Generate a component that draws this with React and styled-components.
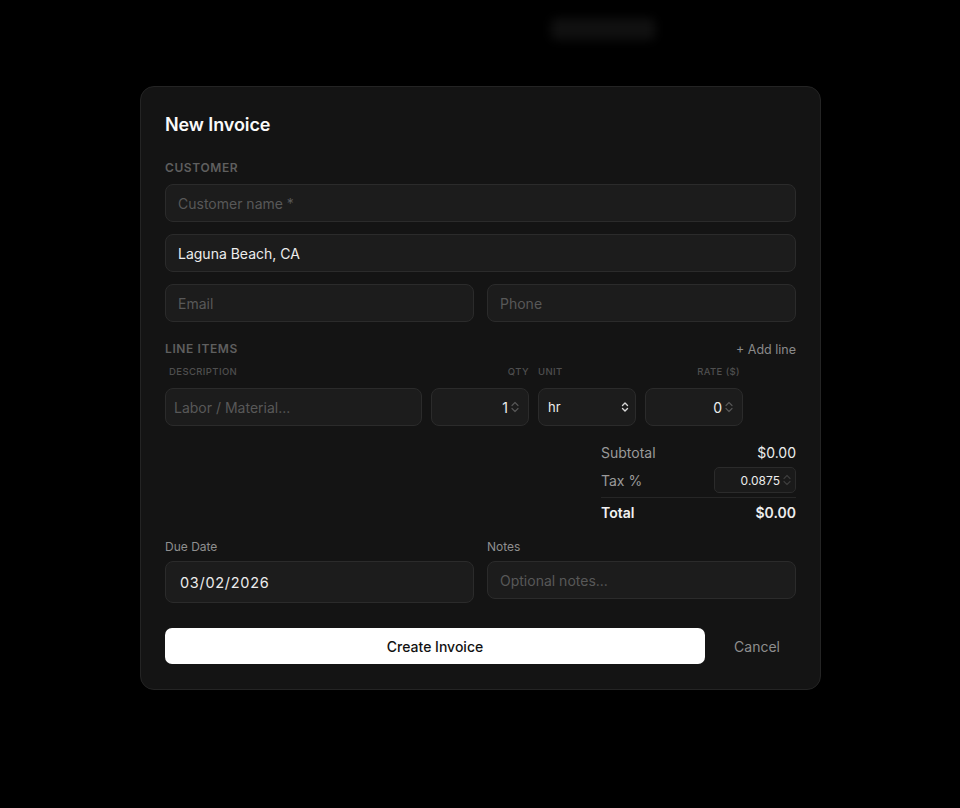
import React from "react";
import styled, { createGlobalStyle } from "styled-components";

const Global = createGlobalStyle`
  html, body { margin: 0; padding: 0; background: #000; }
  body { font-family: Inter, "Noto Sans", "Liberation Sans", sans-serif; -webkit-font-smoothing: antialiased; }
  * { box-sizing: border-box; }
  input::-webkit-outer-spin-button, input::-webkit-inner-spin-button { -webkit-appearance: none; margin: 0; }
`;

const Page = styled.div`
  width: 960px;
  height: 808px;
  background: #000;
  position: relative;
  overflow: hidden;
`;

const GhostBar = styled.div`
  display: flex;
  justify-content: flex-end;
  padding: 18px 305px 0 0;
`;

const Ghost = styled.div`
  width: 104px;
  height: 22px;
  border-radius: 6px;
  background: #101010;
  filter: blur(5px);
`;

const Overlay = styled.div`
  position: absolute;
  inset: 0;
  display: flex;
  justify-content: center;
  align-items: flex-start;
  padding: 86px 0 0 1px;
`;

const Modal = styled.div`
  width: 681px;
  background: #141414;
  border: 1px solid #242424;
  border-radius: 14px;
  padding: 25px 24px 25px 24px;
  display: flex;
  flex-direction: column;
`;

const Title = styled.h2`
  margin: 1px 0 0;
  font-size: 18px;
  font-weight: 600;
  color: #fafafa;
  line-height: 24px;
  letter-spacing: -0.1px;
`;

const Section = styled.div`
  margin-top: ${(p) => p.$mt || 0}px;
  display: flex;
  flex-direction: column;
  gap: ${(p) => p.$gap || 12}px;
`;

const SectionHead = styled.div`
  display: flex;
  justify-content: space-between;
  align-items: center;
`;

const SectionLabel = styled.div`
  font-size: 12px;
  font-weight: 600;
  letter-spacing: 0.6px;
  color: #5f5f5f;
  text-transform: uppercase;
  line-height: 16px;
`;

const AddLine = styled.button`
  background: none;
  border: none;
  padding: 0;
  font: inherit;
  font-size: 12.5px;
  color: #8a8a8a;
  cursor: pointer;
`;

const Field = styled.div`
  height: ${(p) => p.$h || 38}px;
  background: #1c1c1c;
  border: 1px solid #2b2b2b;
  border-radius: 8px;
  display: flex;
  align-items: center;
  padding: 0 ${(p) => p.$pr || 12}px 0 ${(p) => p.$pl || 12}px;
  min-width: 0;
  gap: 2px;
`;

const Input = styled.input`
  flex: 1;
  min-width: 0;
  background: transparent;
  border: none;
  outline: none;
  padding: 0;
  font-family: inherit;
  font-size: ${(p) => p.$fs || 14}px;
  color: #ececec;
  text-align: ${(p) => p.$align || "left"};
  letter-spacing: ${(p) => p.$ls || 0}px;
  &::placeholder { color: #585858; }
`;

const Row2 = styled.div`
  display: grid;
  grid-template-columns: 1fr 1fr;
  gap: 13px;
`;

const ItemsGrid = styled.div`
  display: grid;
  grid-template-columns: 1fr 98px 98px 98px 44px;
  column-gap: 9px;
  row-gap: 9px;
  margin-top: 1px;
`;

const ColHead = styled.div`
  font-size: 9.5px;
  font-weight: 500;
  letter-spacing: 0.4px;
  color: #4f4f4f;
  text-transform: uppercase;
  text-align: ${(p) => p.$align || "left"};
  padding: 0 ${(p) => p.$pr || 0}px 0 ${(p) => p.$pl || 0}px;
  line-height: 14px;
`;

const SelectText = styled.span`
  flex: 1;
  font-size: 13px;
  color: #ececec;
`;

const Totals = styled.div`
  align-self: flex-end;
  width: 195px;
  margin-top: 16px;
  display: flex;
  flex-direction: column;
`;

const TotalRow = styled.div`
  display: flex;
  justify-content: space-between;
  align-items: center;
  height: ${(p) => p.$h || 20}px;
  margin-top: ${(p) => p.$mt || 0}px;
  font-size: 14px;
  color: ${(p) => (p.$strong ? "#f2f2f2" : "#9a9a9a")};
  font-weight: ${(p) => (p.$strong ? 600 : 400)};
`;

const Amount = styled.span`
  color: #ededed;
  font-weight: ${(p) => (p.$strong ? 600 : 400)};
`;

const TaxField = styled(Field)`
  width: 82px;
  height: 26px;
  border-radius: 5px;
  padding: 0 3px 0 8px;
  background: #1a1a1a;
`;

const Divider = styled.div`
  height: 1px;
  background: #262626;
  margin: 3px 0 4px;
`;

const BottomGrid = styled.div`
  display: grid;
  grid-template-columns: 1fr 1fr;
  column-gap: 13px;
  margin-top: 17px;
  align-items: start;
`;

const FieldGroup = styled.div`
  display: flex;
  flex-direction: column;
  gap: 6px;
`;

const FieldLabel = styled.label`
  font-size: 12px;
  color: #8f8f8f;
  line-height: 16px;
`;

const Actions = styled.div`
  display: flex;
  align-items: center;
  margin-top: 25px;
`;

const Primary = styled.button`
  width: 540px;
  height: 36px;
  border: none;
  border-radius: 7px;
  background: #ffffff;
  color: #111;
  font-family: inherit;
  font-size: 14px;
  font-weight: 500;
`;

const Ghostbtn = styled.button`
  margin-left: auto;
  height: 36px;
  padding: 0 16px;
  border: none;
  background: none;
  color: #8e8e8e;
  font-family: inherit;
  font-size: 14px;
`;

const Spin = ({ color = "#555" }) => (
  <svg width="10" height="14" viewBox="0 0 10 14" fill="none" stroke={color} strokeWidth="1.2" strokeLinecap="round" strokeLinejoin="round">
    <path d="M2 5.5 L5 2.5 L8 5.5" />
    <path d="M2 8.5 L5 11.5 L8 8.5" />
  </svg>
);

const SelectIcon = () => (
  <svg width="8" height="12" viewBox="0 0 8 12" fill="none" stroke="#d8d8d8" strokeWidth="1.4" strokeLinecap="round" strokeLinejoin="round">
    <path d="M1.5 4.5 L4 2 L6.5 4.5" />
    <path d="M1.5 7.5 L4 10 L6.5 7.5" />
  </svg>
);

export default function App() {
  return (
    <>
      <Global />
      <Page>
        <GhostBar>
          <Ghost />
        </GhostBar>
        <Overlay>
          <Modal>
            <Title>New Invoice</Title>

            <Section $mt={23} $gap={8}>
              <SectionLabel>Customer</SectionLabel>
              <Section $gap={12}>
                <Field>
                  <Input placeholder="Customer name *" />
                </Field>
                <Field>
                  <Input defaultValue="Laguna Beach, CA" />
                </Field>
                <Row2>
                  <Field>
                    <Input placeholder="Email" />
                  </Field>
                  <Field>
                    <Input placeholder="Phone" />
                  </Field>
                </Row2>
              </Section>
            </Section>

            <Section $mt={19} $gap={7}>
              <SectionHead>
                <SectionLabel>Line items</SectionLabel>
                <AddLine>+ Add line</AddLine>
              </SectionHead>
              <ItemsGrid>
                <ColHead $pl={4}>Description</ColHead>
                <ColHead $align="right">Qty</ColHead>
                <ColHead>Unit</ColHead>
                <ColHead $align="right" $pr={3}>Rate ($)</ColHead>
                <span />
                <Field $pl={8}>
                  <Input placeholder="Labor / Material..." />
                </Field>
                <Field $pr={8}>
                  <Input defaultValue="1" $align="right" />
                  <Spin />
                </Field>
                <Field $pl={9} $pr={6}>
                  <SelectText>hr</SelectText>
                  <SelectIcon />
                </Field>
                <Field $pr={8}>
                  <Input defaultValue="0" $align="right" />
                  <Spin />
                </Field>
                <span />
              </ItemsGrid>
            </Section>

            <Totals>
              <TotalRow>
                <span>Subtotal</span>
                <Amount>$0.00</Amount>
              </TotalRow>
              <TotalRow $h={28} $mt={4}>
                <span>Tax %</span>
                <TaxField>
                  <Input defaultValue="0.0875" $align="right" $fs={12} />
                  <Spin color="#3c3c3c" />
                </TaxField>
              </TotalRow>
              <Divider />
              <TotalRow $strong>
                <span>Total</span>
                <Amount $strong>$0.00</Amount>
              </TotalRow>
            </Totals>

            <BottomGrid>
              <FieldGroup>
                <FieldLabel>Due Date</FieldLabel>
                <Field $h={42} $pl={14}>
                  <Input defaultValue="03/02/2026" $fs={14.5} $ls={0.7} />
                </Field>
              </FieldGroup>
              <FieldGroup>
                <FieldLabel>Notes</FieldLabel>
                <Field>
                  <Input placeholder="Optional notes..." />
                </Field>
              </FieldGroup>
            </BottomGrid>

            <Actions>
              <Primary>Create Invoice</Primary>
              <Ghostbtn>Cancel</Ghostbtn>
            </Actions>
          </Modal>
        </Overlay>
      </Page>
    </>
  );
}
